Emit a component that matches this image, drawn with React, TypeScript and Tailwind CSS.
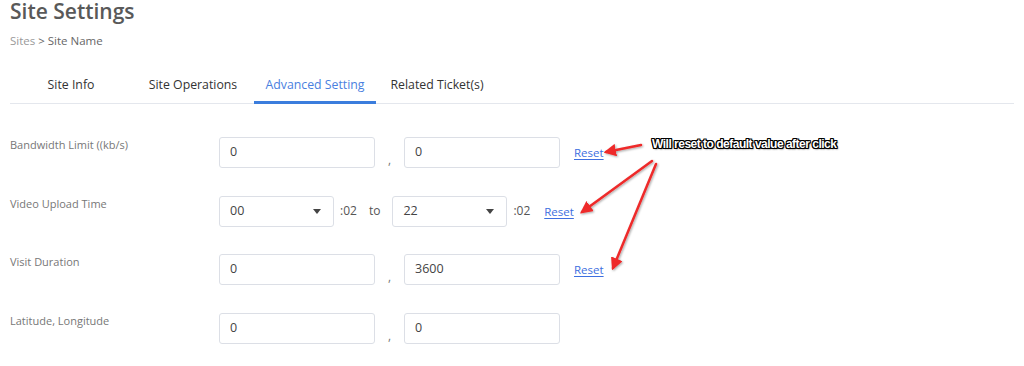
import React from "react";

const tabs = ["Site Info", "Site Operations", "Advanced Setting", "Related Ticket(s)"];

function TextBox({ value }: { value: string }) {
  return (
    <div className="flex h-[31px] w-[156px] items-center rounded-[3px] border border-[#dcdfe6] bg-white px-[10px] text-[12.5px] text-[#444]">
      {value}
    </div>
  );
}

function SelectBox({ value }: { value: string }) {
  return (
    <div className="flex h-[31px] w-[115px] items-center justify-between rounded-[3px] border border-[#dcdfe6] bg-white pl-[10px] pr-[12px] text-[12.5px] text-[#444]">
      <span>{value}</span>
      <svg width="8" height="5" viewBox="0 0 8 5">
        <path d="M0 0h8L4 5z" fill="#444" />
      </svg>
    </div>
  );
}

function Reset() {
  return <a className="ml-[14px] text-[11.5px] text-[#3d6fe0] underline underline-offset-2">Reset</a>;
}

function Label({ text }: { text: string }) {
  return <div className="w-[209px] pt-[1px] text-[11px] leading-[14px] text-[#777]">{text}</div>;
}

function PairRow({ label, a, b, reset }: { label: string; a: string; b: string; reset?: boolean }) {
  return (
    <div className="flex items-start">
      <Label text={label} />
      <div className="flex items-center">
        <TextBox value={a} />
        <span className="w-[29px] pt-[14px] text-center text-[12px] text-[#777]">,</span>
        <TextBox value={b} />
        {reset ? <Reset /> : null}
      </div>
    </div>
  );
}

export default function App() {
  return (
    <div className="relative h-[366px] w-[1024px] overflow-hidden bg-white px-[10px] font-['Open_Sans',sans-serif]">
      <h1 className="mt-[-3px] text-[21px] font-semibold leading-[29px] text-[#595959]">Site Settings</h1>
      <p className="mt-[6px] text-[11.5px] text-[#666]">
        <span className="text-[#999]">Sites</span> &gt; Site Name
      </p>

      <div className="mt-[21px] flex border-b border-[#e4e7ed]">
        {tabs.map((t) => {
          const active = t === "Advanced Setting";
          return (
            <div
              key={t}
              className={
                active
                  ? "-mb-px w-[122px] border-b-[3px] border-[#3b7ddd] pb-[5px] pt-[6px] text-center text-[12.3px] text-[#4a7fe0]"
                  : "w-[122px] pb-[8px] pt-[6px] text-center text-[12.3px] text-[#333]"
              }
            >
              {t}
            </div>
          );
        })}
      </div>

      <div className="mt-[33px] flex flex-col gap-[27px]">
        <PairRow label="Bandwidth Limit ((kb/s)" a="0" b="0" reset />
        <div className="flex items-start">
          <Label text="Video Upload Time" />
          <div className="flex items-center text-[12px] text-[#555]">
            <SelectBox value="00" />
            <span className="ml-[6px]">:02</span>
            <span className="ml-[12px] mr-[12px]">to</span>
            <SelectBox value="22" />
            <span className="ml-[6px]">:02</span>
            <Reset />
          </div>
        </div>
        <PairRow label="Visit Duration" a="0" b="3600" reset />
        <PairRow label="Latitude, Longitude" a="0" b="0" />
      </div>

      <svg className="pointer-events-none absolute left-0 top-0" width="1024" height="366">
        <defs>
          <filter id="sh" x="-20%" y="-20%" width="140%" height="140%">
            <feDropShadow dx="1" dy="1" stdDeviation="1" floodColor="#000" floodOpacity="0.35" />
          </filter>
          <marker id="ah" viewBox="0 0 10 10" refX="8" refY="5" markerWidth="5" markerHeight="5" orient="auto-start-reverse">
            <path d="M0 0L10 5L0 10z" fill="#ee2a2a" />
          </marker>
        </defs>
        <g stroke="#ee2a2a" strokeWidth="2.5" fill="none" filter="url(#sh)" strokeLinecap="round">
          <line x1="641" y1="145" x2="606" y2="152" markerEnd="url(#ah)" />
          <line x1="652" y1="161" x2="582" y2="212" markerEnd="url(#ah)" />
          <line x1="656" y1="164" x2="613" y2="268" markerEnd="url(#ah)" />
        </g>
      </svg>
      <div
        className="absolute left-[652px] top-[135px] font-['Liberation_Sans',sans-serif] text-[12px] font-bold tracking-[-0.5px] text-white"
        style={{ textShadow: "1px 0 0 #000,-1px 0 0 #000,0 1px 0 #000,0 -1px 0 #000,1px 1px 0 #000,-1px -1px 0 #000,1px -1px 0 #000,-1px 1px 0 #000,1px 1px 2px #000" }}
      >
        Will reset to default value after click
      </div>
    </div>
  );
}
